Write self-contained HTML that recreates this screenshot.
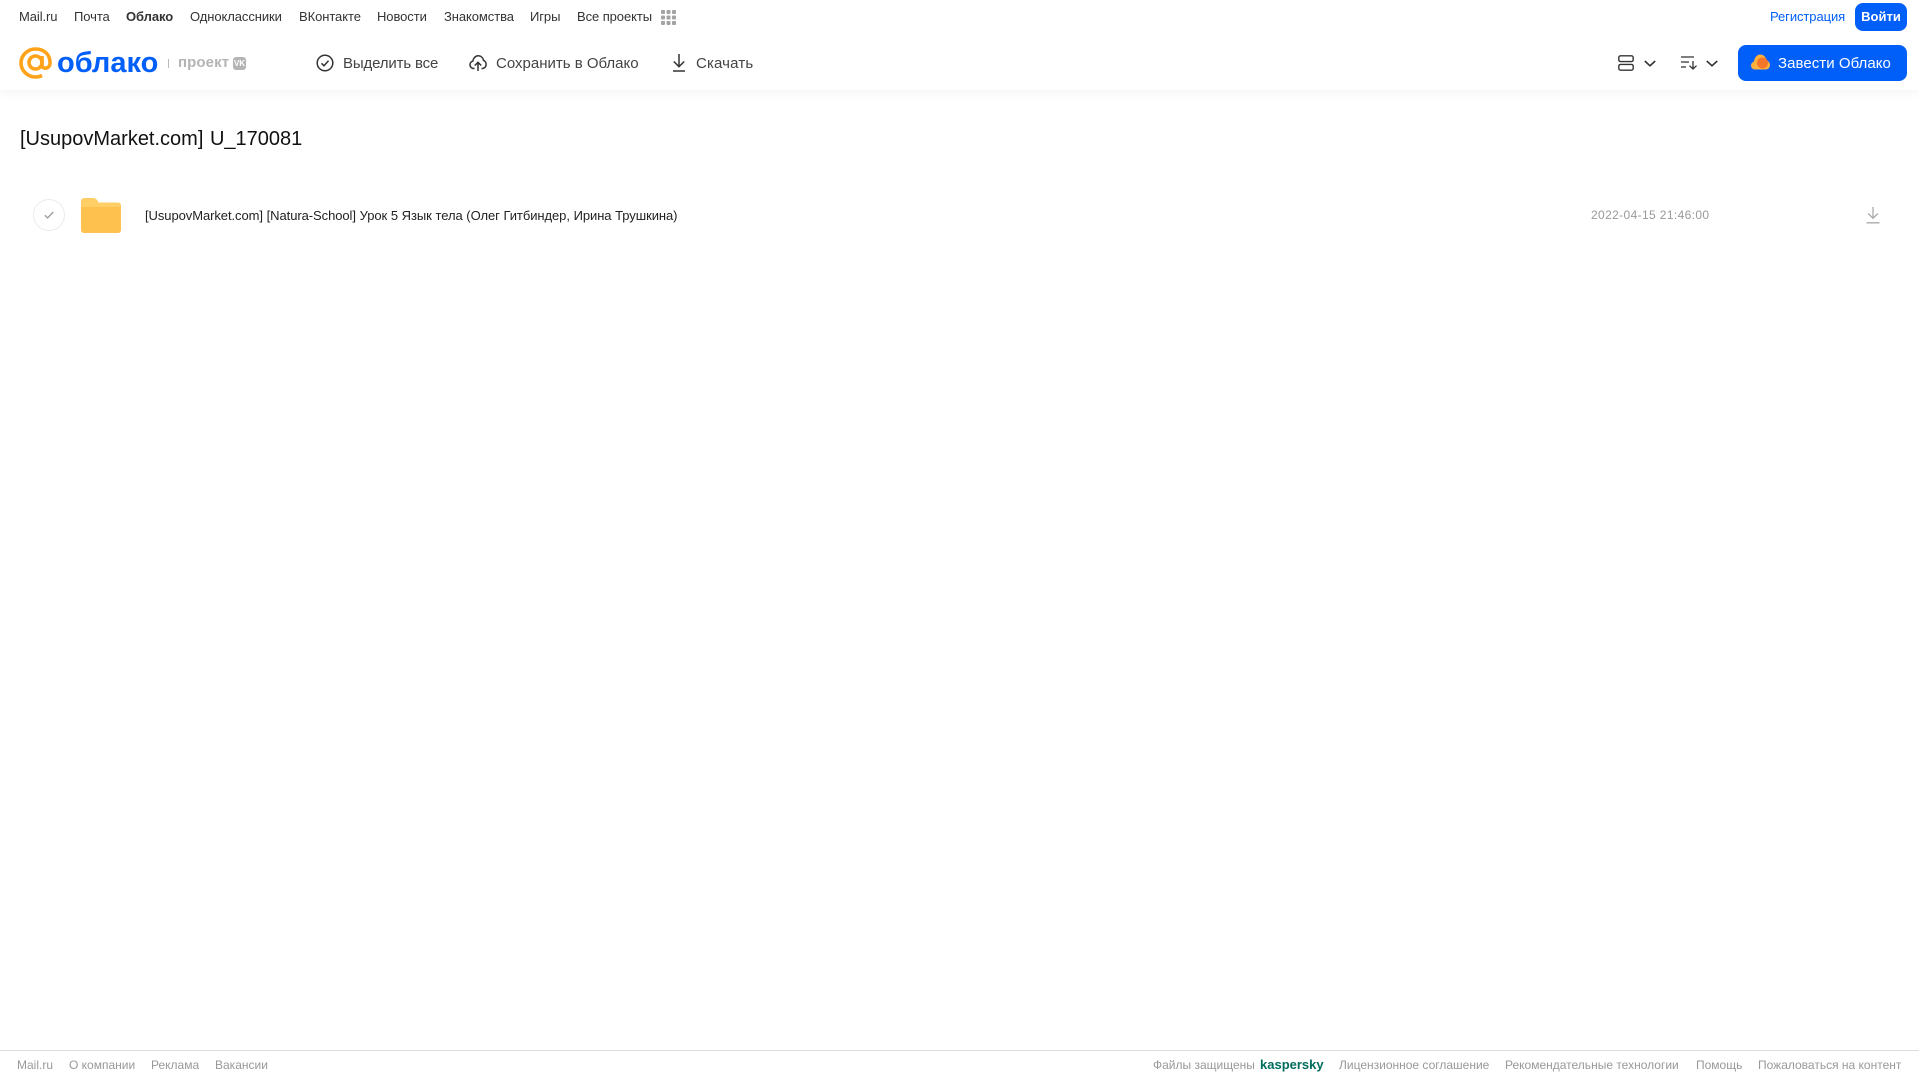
<!DOCTYPE html>
<html lang="ru"><head><meta charset="utf-8"><title>Облако</title>
<style>
html,body{margin:0;padding:0;background:#fff;width:1919px;height:1079px;overflow:hidden;font-family:"Liberation Sans",sans-serif}
.t{position:absolute;white-space:nowrap;line-height:20px;height:20px;transform-origin:left center}
.n{top:7px;font-size:13px;color:#333;letter-spacing:-.08px}
.b{top:54px;font-size:15px;color:#444;letter-spacing:0}
.f{top:1055px;font-size:12px;color:#999}
svg{position:absolute;overflow:visible}
#hd{position:absolute;left:0;top:0;width:1919px;height:90px;background:#fff;box-shadow:0 2px 10px rgba(0,0,0,.05)}
</style></head><body>
<div id="hd"></div>
<span class="t n" style="left:19px">Mail.ru</span>
<span class="t n" style="left:74px">Почта</span>
<span class="t n" style="left:126px;font-weight:bold">Облако</span>
<span class="t n" style="left:190px">Одноклассники</span>
<span class="t n" style="left:299px">ВКонтакте</span>
<span class="t n" style="left:377px">Новости</span>
<span class="t n" style="left:444px">Знакомства</span>
<span class="t n" style="left:530px">Игры</span>
<span class="t n" style="left:577px">Все проекты</span>
<svg style="left:661px;top:10px" width="15" height="15" fill="#a3a3a3"><rect x="0" y="0" width="4" height="4" rx="1"/><rect x="5.500" y="0" width="4" height="4" rx="1"/><rect x="11" y="0" width="4" height="4" rx="1"/><rect x="0" y="5.500" width="4" height="4" rx="1"/><rect x="5.500" y="5.500" width="4" height="4" rx="1"/><rect x="11" y="5.500" width="4" height="4" rx="1"/><rect x="0" y="11" width="4" height="4" rx="1"/><rect x="5.500" y="11" width="4" height="4" rx="1"/><rect x="11" y="11" width="4" height="4" rx="1"/></svg>
<span class="t n" style="left:1770px;color:#005ff9">Регистрация</span>
<div style="position:absolute;left:1855px;top:3px;width:52px;height:28px;background:#005ff9;border-radius:8px;color:#fff;font-size:13px;font-weight:bold;line-height:27px;text-align:center">Войти</div>

<svg style="left:19px;top:47px" width="33" height="32" viewBox="0 0 33 32" fill="none" stroke="#ffa31a" stroke-width="3.600"><circle cx="16.500" cy="15.500" r="6.500"/><path d="M23 9v9c0 4.500 7.500 4.500 8-1.500C31.500 7.500 25 2 16.500 2 8.500 2 2 8.500 2 16s6.500 14 14.500 14c2.500 0 4.500-.5 6.500-1.500"/></svg>
<span class="t" style="left:57px;top:49px;height:28px;line-height:28px;font-size:29px;font-weight:bold;color:#005ff9">облако</span>
<div style="position:absolute;left:168px;top:59px;width:1px;height:9px;background:#bbb"></div>
<span class="t" style="left:178px;top:53px;font-size:15px;font-weight:bold;color:#b4b4b4;letter-spacing:.1px">проект</span>
<div style="position:absolute;left:233px;top:57px;width:13px;height:13px;border-radius:3px;background:#b4b4b4;color:#fff;font-size:8px;font-weight:bold;line-height:13px;text-align:center">VK</div>

<svg style="left:316px;top:54px" width="18" height="18" viewBox="0 0 18 18" fill="none" stroke="#333" stroke-width="1.500"><circle cx="9" cy="9" r="7.800"/><path d="M5.500 9.300l2.500 2.500 4.500-5"/></svg>
<span class="t b" style="left:343px;letter-spacing:-.15px">Выделить все</span>
<svg style="left:469px;top:54px" width="18" height="18" viewBox="0 0 18 18" fill="none" stroke="#333" stroke-width="1.500"><path d="M5.500 14.500H4.300C2.300 14 1 12.500 1 10.700c0-1.700 1.200-3.200 2.800-3.600C4.300 4 6.500 1.800 9.300 1.800c2.700 0 4.800 2 5.200 4.600 1.600.5 2.600 2.300 2.600 4 0 2-1.300 3.600-3.300 4.100h-1.300"/><path d="M9 17V8.500M5.800 11.500L9 8.300l3.200 3.200"/></svg>
<span class="t b" style="left:496px">Сохранить в Облако</span>
<svg style="left:671px;top:54px" width="16" height="18" viewBox="0 0 16 18" fill="none" stroke="#333" stroke-width="1.500"><path d="M8 0v12.500M2.800 7.500L8 12.700l5.200-5.200M2 17h12"/></svg>
<span class="t b" style="left:696px;letter-spacing:.15px">Скачать</span>

<svg style="left:1618px;top:55px" width="16" height="16" viewBox="0 0 16 16" fill="none" stroke="#333" stroke-width="1.400"><rect x=".8" y=".8" width="14.400" height="5.800" rx="1.800"/><rect x=".8" y="9.400" width="14.400" height="5.800" rx="1.800"/></svg>
<svg style="left:1644px;top:60px" width="12" height="7" viewBox="0 0 12 7" fill="none" stroke="#333" stroke-width="1.600"><path d="M.8 1l5.200 4.800L11.200 1"/></svg>
<svg style="left:1681px;top:56px" width="16" height="14" viewBox="0 0 16 14" fill="none" stroke="#333" stroke-width="1.300"><path d="M0 1h13M0 6h8M0 11h5M12 5v8M8.500 9.700L12 13l3.500-3.300"/></svg>
<svg style="left:1706px;top:60px" width="12" height="7" viewBox="0 0 12 7" fill="none" stroke="#333" stroke-width="1.600"><path d="M.8 1l5.200 4.800L11.200 1"/></svg>
<div style="position:absolute;left:1738px;top:45px;width:169px;height:36px;background:#005ff9;border-radius:8px"></div>
<svg style="left:1751px;top:54px" width="19" height="16" viewBox="0 0 19 16"><path d="M4 15.500C1.800 15.500 0 13.700 0 11.500c0-1.900 1.300-3.400 3-3.900C3.400 3.600 6 .5 9.300.5c3.200 0 5.700 2.600 6.200 5.700 2 .7 3.500 2.600 3.500 4.800 0 2.500-2 4.500-4.500 4.500z" fill="#ffb13d"/><circle cx="11.500" cy="9" r="5.500" fill="#f5762a"/></svg>
<span class="t b" style="left:1778px;color:#fff;letter-spacing:.05px">Завести Облако</span>

<span class="t" style="left:20px;top:127px;height:24px;line-height:24px;font-size:20px;color:#111;word-spacing:1px;letter-spacing:0">[UsupovMarket.com] U_170081</span>

<div style="position:absolute;left:33px;top:199px;width:30px;height:30px;border:1px solid #ececec;border-radius:50%"></div>
<svg style="left:44px;top:211px" width="10" height="8" viewBox="0 0 10 8" fill="none" stroke="#999" stroke-width="1.300"><path d="M.8 4.200l2.800 2.800L9.200 1"/></svg>
<svg style="left:81px;top:198px" width="40" height="35" viewBox="0 0 40 35"><path d="M0 3a3 3 0 0 1 3-3h9c2.500 0 4 1.500 5 3.500l.5 1H37a3 3 0 0 1 3 3V32a3 3 0 0 1-3 3H3a3 3 0 0 1-3-3z" fill="#ffcf66"/><path d="M0 9h40v23a3 3 0 0 1-3 3H3a3 3 0 0 1-3-3z" fill="#ffc14d"/></svg>
<span class="t" style="left:145px;top:206px;font-size:13px;color:#222;letter-spacing:-.07px;word-spacing:.15px">[UsupovMarket.com] [Natura-School] Урок 5 Язык тела (Олег Гитбиндер, Ирина Трушкина)</span>
<span class="t" style="left:1591px;top:205px;font-size:12px;color:#999;letter-spacing:.37px">2022-04-15 21:46:00</span>
<svg style="left:1866px;top:207px" width="14" height="17" viewBox="0 0 14 17" fill="none" stroke="#aaa" stroke-width="1.300"><path d="M7 0v11M2.200 6.500L7 11.300l4.800-4.800M.5 15.800h13"/></svg>

<div style="position:absolute;left:0;top:1050px;width:1919px;height:1px;background:#ddd"></div>
<span class="t f" style="left:17px">Mail.ru</span>
<span class="t f" style="left:69px">О компании</span>
<span class="t f" style="left:151px">Реклама</span>
<span class="t f" style="left:215px">Вакансии</span>
<span class="t f" style="left:1153px">Файлы защищены</span>
<span class="t f" style="left:1260px;color:#006d5c;font-weight:bold;font-size:13px">kaspersky</span>
<span class="t f" style="left:1339px">Лицензионное соглашение</span>
<span class="t f" style="left:1505px">Рекомендательные технологии</span>
<span class="t f" style="left:1696px">Помощь</span>
<span class="t f" style="left:1758px">Пожаловаться на контент</span>
</body></html>
